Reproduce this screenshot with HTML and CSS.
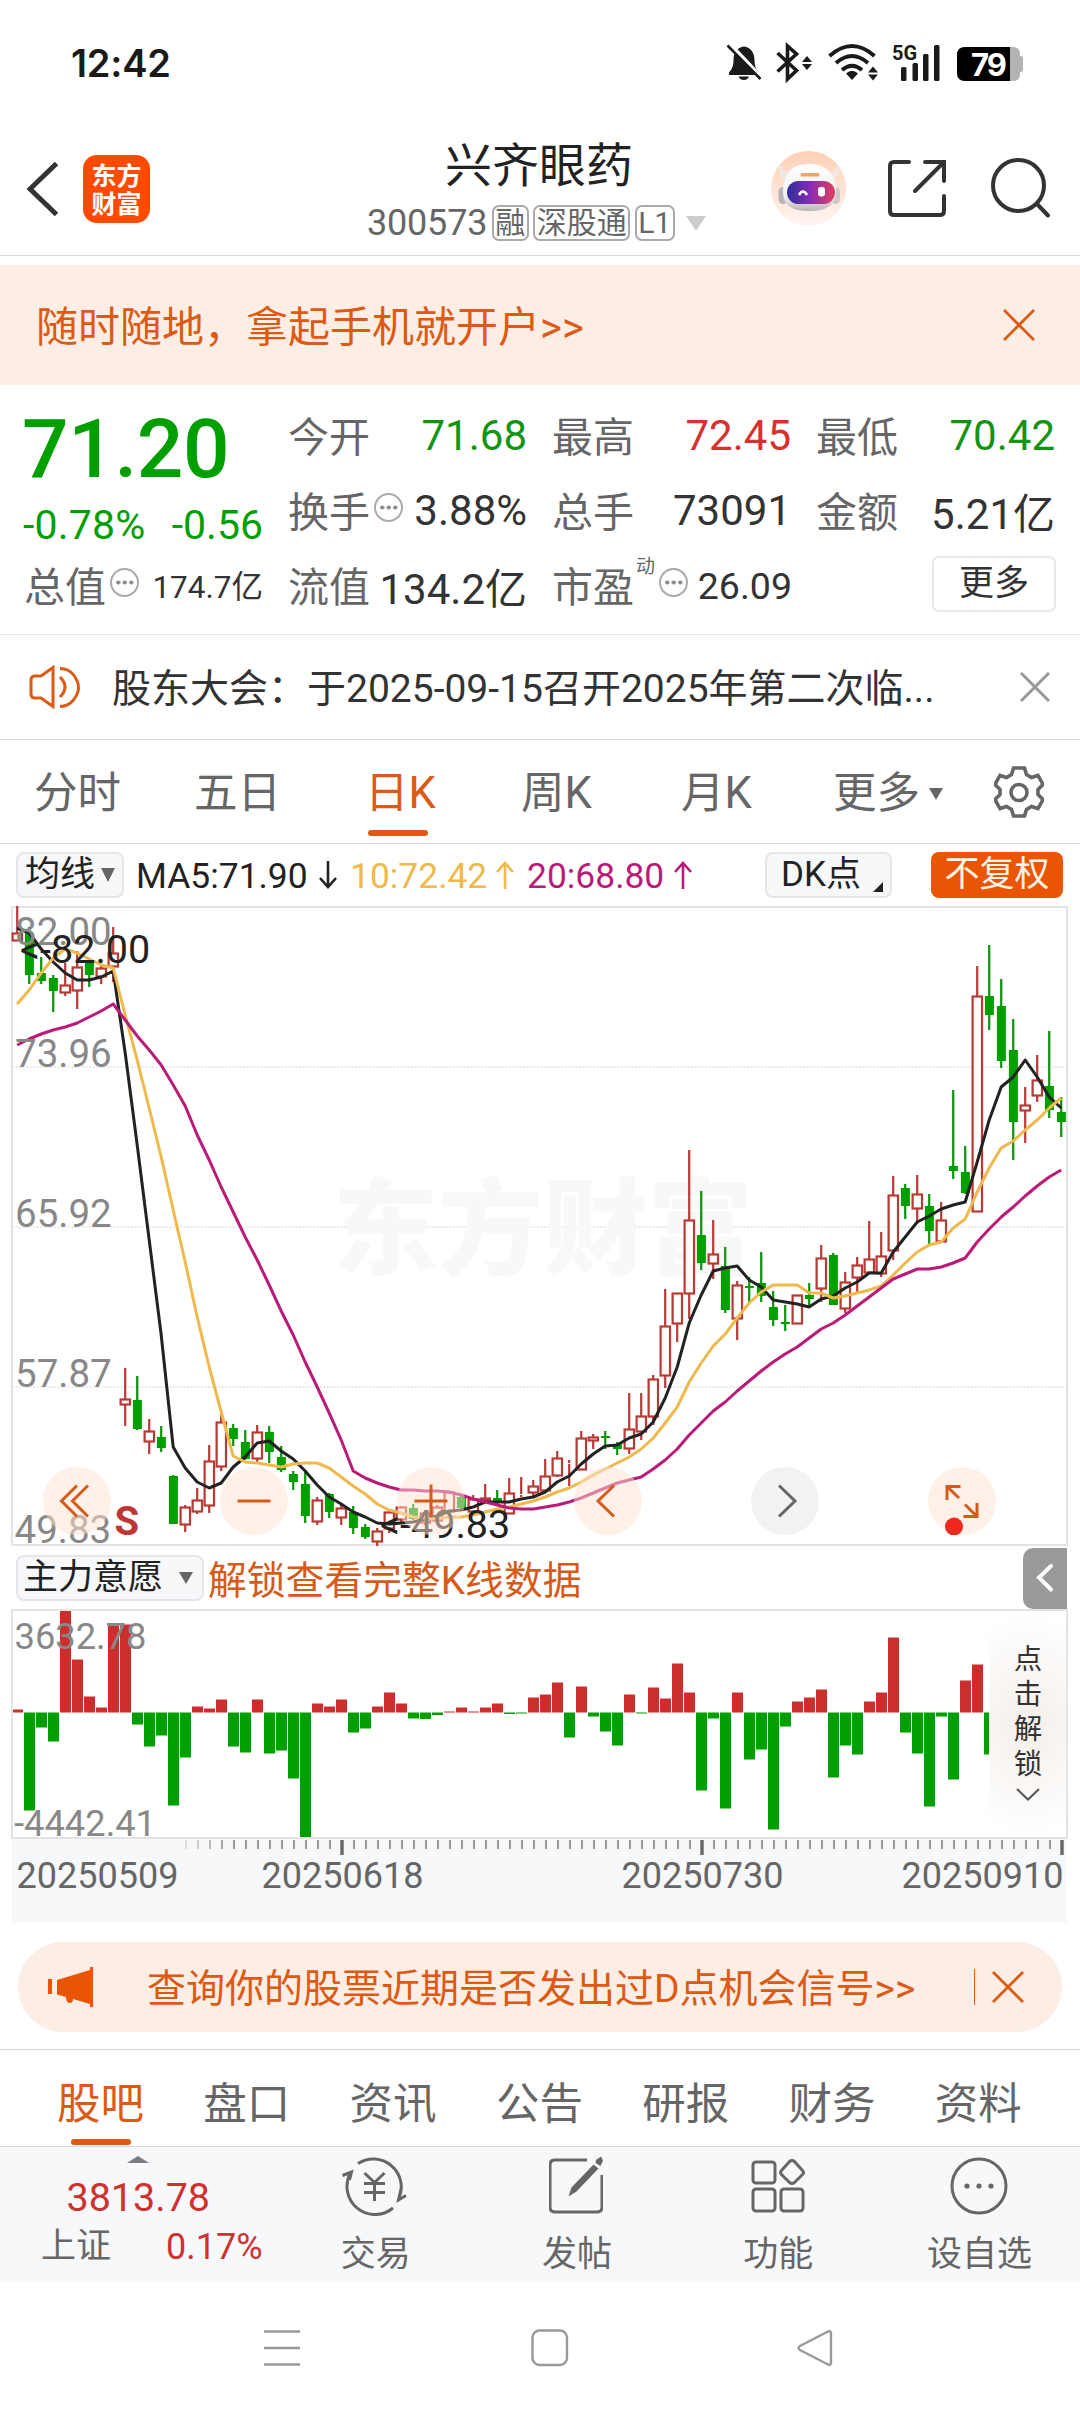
FILE: index.html
```html
<!DOCTYPE html>
<html lang="zh-CN">
<head>
<meta charset="utf-8">
<title>兴齐眼药 300573</title>
<link rel="stylesheet" href="styles.css">
</head>
<body>
<div class="screen">
  <div class="status">
    <span class="clock">12:42</span>
    <svg class="status-icons" viewBox="725 40 300 45" width="300" height="45">
      <g fill="#1a1a1a">
        <path d="M744 46.500c-7 1-10.500 6.500-10.500 13.500 0 6-1.500 9-4.500 12.500v2.500h30v-2.500c-3-3.500-4.500-6.500-4.500-12.500 0-7-3.500-12.500-10.500-13.500z"/>
        <path d="M738.500 76.500h10.500q-1.500 3.500-5.200 3.500t-5.300-3.500z"/>
        <path d="M807 56l5 6h-10zM807 70l5-6h-10zM873 66.500l5 6h-10zM873 80.500l5-6h-10z"/>
        <path d="M852 80l-6-6.500q6-5.500 12 0z"/>
        <rect x="901" y="67" width="5.500" height="14" rx="1.500"/><rect x="912.500" y="63" width="5.500" height="18" rx="1.500"/><rect x="923" y="54" width="5.500" height="27" rx="1.500"/><rect x="934" y="45" width="5.500" height="36" rx="1.500"/>
      </g>
      <path d="M729 43l34 36" stroke="#fff" stroke-width="4"/>
      <path d="M727.500 45.500l33 33.500" stroke="#1a1a1a" stroke-width="2.500"/>
      <path d="M777.500 53l19 17.500-9 8.500v-33l9 8-19 17.500" fill="none" stroke="#1a1a1a" stroke-width="3.600"/>
      <path d="M829.500 56q22.500-20 45 0M836 63q16-14 32 0M842 70q10-8.500 20 0" fill="none" stroke="#1a1a1a" stroke-width="3.800"/>
      <text x="892" y="60" class="net">5G</text>
      <path d="M1010 47h3q7 0 7 7v2h1q2 0 2 3v10q0 3-2 3h-1v2q0 7-7 7h-3z" fill="#b3b3b3"/>
      <path d="M1010 47v34h-45q-8 0-8-8V55q0-8 8-8z"/>
      <text x="971" y="75.500" class="bat">79</text>
    </svg>
  </div>

  <header class="head">
    <svg class="back" width="32" height="56" viewBox="0 0 32 56"><path d="M29.500 2.500L3 28l26.500 25.500" fill="none" stroke="#333" stroke-width="5"/></svg>
    <div class="logo"><span>东方</span><span>财富</span></div>
    <div class="title">
      <h1>兴齐眼药</h1>
      <div class="sub"><span>300573</span><b>融</b><b>深股通</b><b>L1</b><i class="tri"></i></div>
    </div>
    <svg class="tools" width="282" height="80" viewBox="769 149 282 80">
      <defs>
        <linearGradient id="halo" x2="0" y2="1"><stop offset="0" stop-color="#ffcfb6"/><stop offset="1" stop-color="#fff6f1"/></linearGradient>
        <linearGradient id="visor"><stop offset="0" stop-color="#2c2e9c"/><stop offset=".5" stop-color="#8c2cb4"/><stop offset="1" stop-color="#e0405c"/></linearGradient>
        <linearGradient id="shell" x2="0" y2="1"><stop offset="0" stop-color="#fff"/><stop offset=".7" stop-color="#f1eeee"/><stop offset="1" stop-color="#b9b3b8"/></linearGradient>
      </defs>
      <circle cx="808.500" cy="188.500" r="37.500" fill="url(#halo)"/>
      <path d="M780 164q-3 8 1 13 3 5 8 6l6-9q-12-1-15-10zM838 164q3 8-1 13-3 5-8 6l-6-9q12-1 16-10z" fill="#f1e6e3"/>
      <rect x="778.500" y="187" width="9" height="17" rx="4.500" fill="#b9b2b8"/><rect x="831" y="187" width="9" height="17" rx="4.500" fill="#cfc7ca"/>
      <path d="M783 192c0-20 10-28 26-28s27 8 27 28c0 14-11 19-27 19s-26-5-26-19z" fill="url(#shell)"/>
      <rect x="800.500" y="173" width="19" height="3.500" rx="1.500" fill="#efa467"/>
      <rect x="787" y="181" width="48" height="23" rx="11.500" fill="url(#visor)"/>
      <path d="M799 195q4-7 8 0" fill="none" stroke="#fff" stroke-width="2.600"/><rect x="818" y="187" width="7" height="9.500" rx="3" fill="#fff"/>
      <g fill="none" stroke="#333" stroke-width="4" stroke-linecap="round">
        <path d="M909 162h-15q-4 0-4 4v45q0 4 4 4h46q4 0 4-4v-15M925 162h19v19M943 163l-28 28"/>
        <circle cx="1018.500" cy="185.500" r="25.500"/><path d="M1037.500 204.500l10.500 11"/>
      </g>
    </svg>
  </header>

  <div class="promo">
    <span>随时随地，拿起手机就开户&gt;&gt;</span>
    <svg width="34" height="34" viewBox="0 0 34 34"><path d="M2 2l30 30M32 2L2 32" stroke="#dc5a14" stroke-width="2.800"/></svg>
  </div>

  <section class="quote">
    <div class="price">
      <strong>71.20</strong>
      <div class="delta"><span>-0.78%</span><span>-0.56</span></div>
    </div>
    <div class="cell"><label>今开</label><em class="down">71.68</em></div>
    <div class="cell"><label>最高</label><em class="up">72.45</em></div>
    <div class="cell"><label>最低</label><em class="down">70.42</em></div>
    <div class="cell"><label>换手</label><i class="dots"></i><em>3.88%</em></div>
    <div class="cell"><label>总手</label><em>73091</em></div>
    <div class="cell"><label>金额</label><em>5.21亿</em></div>
    <div class="cell"><label>总值</label><i class="dots"></i><em class="small">174.7亿</em></div>
    <div class="cell"><label>流值</label><em>134.2亿</em></div>
    <div class="cell"><label>市盈</label><sup>动</sup><i class="dots pe"></i><em class="mid">26.09</em></div>
    <div class="cell"><button class="more">更多</button></div>
  </section>

  <div class="news">
    <svg width="52" height="44" viewBox="29 665 52 44"><g fill="none" stroke="#dc5a14" stroke-width="3"><path d="M53 667.500L41 676h-6q-4 0-4 4v14q0 4 4 4h6l12 8.500z"/><path d="M60 677q10 10 0 20M60 668.500q9 0 14 7t4.500 13-5.500 12-13 6"/></g></svg>
    <span>股东大会：于2025-09-15召开2025年第二次临...</span>
    <svg width="30" height="30" viewBox="0 0 30 30"><path d="M1 1l28 28M29 1L1 29" stroke="#999" stroke-width="3"/></svg>
  </div>

  <nav class="periods">
    <span>分时</span><span>五日</span><span class="on">日K</span><span>周K</span><span>月K</span><span>更多<i class="tri dark"></i></span>
    <svg width="50" height="52" viewBox="-25 -26 50 52"><g fill="none" stroke="#666" stroke-width="3.600"><path d="M-5.500-24h11l2 6.500 5 3 6.500-2 5 9-5 5v5l5 5-5 9-6.500-2-5 3-2 6.500h-11l-2-6.500-5-3-6.500 2-5-9 5-5v-5l-5-5 5-9 6.500 2 5-3z"/><circle cy="0.500" r="8"/></g></svg>
  </nav>

  <div class="ma">
    <span class="chip avg">均线<i class="tri dark"></i></span>
    <span class="m5">MA5:71.90</span><svg class="a5" width="18" height="28" viewBox="0 0 18 28"><path d="M9 0v26M1 17l8 9 8-9" fill="none" stroke="#222" stroke-width="2.600"/></svg>
    <span class="m10">10:72.42</span><svg class="a10" width="18" height="28" viewBox="0 0 18 28"><path d="M9 28V2M1 11l8-9 8 9" fill="none" stroke="#efb94c" stroke-width="2.600"/></svg>
    <span class="m20">20:68.80</span><svg class="a20" width="18" height="28" viewBox="0 0 18 28"><path d="M9 28V2M1 11l8-9 8 9" fill="none" stroke="#ba1b79" stroke-width="2.600"/></svg>
    <span class="chip dk">DK点<i class="corner"></i></span>
    <span class="chip fq">不复权</span>
  </div>

  <section class="kline">
    <svg width="1080" height="640" viewBox="0 906 1080 640">
      <g class="frame">
        <path d="M12 907H1067V1545H12z"/>
        <path class="grid" d="M12 1067H1067M12 1227H1067M12 1387H1067"/>
      </g>
      <text class="mark" x="333" y="1266">东方财富</text>
      <g id="candles"></g>
      <g id="averages"></g>
      <g class="scale"><text x="15" y="945">82.00</text><text x="15" y="1067">73.96</text><text x="15" y="1227">65.92</text><text x="15" y="1387">57.87</text><text x="14.500" y="1543">49.83</text></g>
      <text class="peak" x="20" y="963">&lt;-82.00</text>
      <text class="peak" x="380" y="1537.500">&lt;-49.83</text>
      <text class="sell" x="114.500" y="1534.500">S</text>
    </svg>
    <div class="controls">
      <i><svg viewBox="-34 -34 68 68"><path d="M0-15.500L-15.500 0 0 15.500M11-15.500L-4.500 0 11 15.500"/></svg></i>
      <i><svg viewBox="-34 -34 68 68"><path d="M-16.500 0h33"/></svg></i>
      <i><svg viewBox="-34 -34 68 68"><path d="M-16.500 0h33M0-16.500v33"/></svg></i>
      <i><svg viewBox="-34 -34 68 68"><path d="M6-15.500L-10 0 6 15.500"/></svg></i>
      <i class="off"><svg viewBox="-34 -34 68 68"><path d="M-6-15.500L10 0-6 15.500"/></svg></i>
      <i><svg viewBox="-34 -34 68 68"><path d="M-15-1v-13.500H-1.500M-15-14.500L-3-3M15 2v13.500H1.500M15 15.500L3 3.500"/><circle class="dot" cx="-8" cy="25.500" r="9"/></svg></i>
    </div>
  </section>

  <div class="indicator">
    <span class="chip main">主力意愿<i class="tri dark"></i></span>
    <span class="unlock">解锁查看完整K线数据</span>
    <span class="fold"><svg width="18" height="30" viewBox="0 0 18 30"><path d="M15 3L3 14.500 15 26.500" fill="none" stroke="#fff" stroke-width="4" stroke-linecap="round"/></svg></span>
  </div>

  <section class="volume">
    <svg width="1080" height="230" viewBox="0 1609 1080 230">
      <g id="bars"></g>
      <path class="edge" d="M12 1610H1067V1838H12z"/>
      <g class="scale vs"><text x="14.500" y="1648.500">3632.78</text><text x="14" y="1836">-4442.41</text></g>
    </svg>
    <div class="lock"><span>点</span><span>击</span><span>解</span><span>锁</span><svg width="24" height="13" viewBox="0 0 24 13"><path d="M1 1l11 10.500L23 1" fill="none" stroke="#555" stroke-width="2"/></svg></div>
  </section>

  <div class="axis">
    <svg width="1055" height="16" viewBox="12 1839 1055 16"><g id="ticks"></g></svg>
    <div class="dates"><span>20250509</span><span>20250618</span><span>20250730</span><span>20250910</span></div>
  </div>

  <div class="banner">
    <svg width="46" height="40" viewBox="48 1967 46 40"><path d="M48 1979h4v15h-4zM57 1980l33-10v-3h3v40h-3v-3l-17-5q0 4-3 4-4 0-4-6l-9-2.500z" fill="#ea5504"/></svg>
    <span>查询你的股票近期是否发出过D点机会信号&gt;&gt;</span>
    <u></u>
    <svg width="32" height="32" viewBox="0 0 32 32"><path d="M1 1l30 30M31 1L1 31" stroke="#dc5a14" stroke-width="2.800"/></svg>
  </div>

  <nav class="sections">
    <span class="on">股吧</span><span>盘口</span><span>资讯</span><span>公告</span><span>研报</span><span>财务</span><span>资料</span>
  </nav>

  <footer class="bottom">
    <div class="index">
      <i class="caret"></i>
      <strong>3813.78</strong>
      <div><span>上证</span><em>0.17%</em></div>
    </div>
    <div class="act"><svg viewBox="343 2156 66 60" width="66" height="60"><path d="M359 2163.500A28 28 0 0 1 400 2198M402.500 2187L399.500 2200l7.500-4.500M394 2208A28 28 0 0 1 351.500 2173M343.500 2175.500l9-3.500-2 8M365.500 2173l10 9.500 10-9.500M365 2183.500h21M365 2192.500h21M375.500 2183v18"/></svg><span>交易</span></div>
    <div class="act"><svg viewBox="550 2156 54 60" width="54" height="60"><path d="M588 2160h-32q-5 0-5 5v42q0 5 5 5h42q5 0 5-5v-32"/><path class="solid" d="M597 2160l5-3.500 2 4-2.500 5.500-5-3zM594.500 2164.500l5 4-22 23-8 5 3-9z"/></svg><span>发帖</span></div>
    <div class="act"><svg viewBox="751 2156 54 60" width="54" height="60"><rect x="753" y="2162" width="22" height="21" rx="3"/><rect x="753" y="2189" width="22" height="22" rx="3"/><rect x="781" y="2189" width="22" height="22" rx="3"/><path d="M789.500 2161.500q2.500-2 5 0l8 9q2 2 0 4l-8 8q-2.500 2-5 0l-8-8q-2-2 0-4z"/></svg><span>功能</span></div>
    <div class="act"><svg viewBox="950 2156 58 60" width="58" height="60"><circle cx="979" cy="2186" r="27"/><g class="solid"><circle cx="967" cy="2186" r="2.600"/><circle cx="979" cy="2186" r="2.600"/><circle cx="991" cy="2186" r="2.600"/></g></svg><span>设自选</span></div>
  </footer>

  <div class="sysnav">
    <svg width="36" height="38" viewBox="0 0 36 38"><path d="M0 2.500h36M0 19h36M0 35.500h36"/></svg>
    <svg width="38" height="38" viewBox="0 0 38 38"><rect x="1.500" y="1.500" width="34.500" height="34.500" rx="7"/></svg>
    <svg width="38" height="38" viewBox="0 0 38 38"><path d="M32 2.500L4 17q-3 2 0 4l28 14.500q3 1 3-2v-29q0-3-3-2z"/></svg>
  </div>
</div>
<script src="chart.js"></script>
</body>
</html>
```

FILE: styles.css
```css
* { box-sizing: border-box; }
body {
  margin: 0;
  background: #fff;
  font-family: Roboto, "Noto Sans CJK SC", sans-serif;
  color: #333;
}
svg { display: block; flex: none; }
h1, em, i, b, strong, u { font-style: normal; font-weight: 400; margin: 0; text-decoration: none; }
.screen { width: 1080px; height: 2414px; display: flex; flex-direction: column; overflow: hidden; }
.screen > * { flex: none; }
span, label, em { white-space: nowrap; }

.tri { display: inline-block; width: 0; height: 0; border: 10.5px solid transparent; border-top: 15px solid #ccc; border-bottom: 0; }
.tri.dark { border-width: 12px 7.5px 0; border-top-color: #666; }

.status { height: 115px; display: flex; justify-content: space-between; padding: 41px 55px 0 71px; }
.status-icons { margin-top: -1px; }
.clock { font: 600 38px/45px Inter, sans-serif; color: #1a1a1a; letter-spacing: -.2px; }
.net { font: 700 20px Roboto, sans-serif; fill: #1a1a1a; }
.bat { font: 700 31px Inter, sans-serif; fill: #fff; letter-spacing: -2px; }

.head { height: 141px; display: flex; align-items: flex-start; border-bottom: 1px solid #d8d8d8; padding-left: 27px; }
.back { margin-top: 46px; }
.logo { margin: 40px 0 0 24px; width: 67px; height: 68px; border-radius: 14px; background: #ff4a00; color: #fff; font: 700 25px/28px "Noto Sans CJK SC", sans-serif; display: flex; flex-direction: column; align-items: center; justify-content: center; padding-bottom: 2px; }
.title { width: 400px; margin: 21px 0 0 201px; }
.title h1 { font-size: 47px; line-height: 60px; color: #222; margin-left: 94px; }
.sub { display: flex; align-items: center; height: 36px; margin-top: 9px; margin-left: 16px; font-size: 36px; color: #666; }
.sub span { letter-spacing: -.2px; }
.sub b { height: 36px; border: 2px solid #aaa; border-radius: 7px; font-size: 30px; line-height: 31px; padding: 0 1.5px; margin-left: 4.5px; }
.sub .tri { margin-left: 11px; }
.tools { margin: 34px 0 0 18px; }

.promo { height: 120px; margin-top: 9px; padding: 0 44px 0 36px; background: #fceee5; display: flex; align-items: center; justify-content: space-between; font-size: 42px; color: #dc5a14; }
.promo span { margin-top: -4px; }
.promo svg { margin-top: -1px; }

.quote { height: 250px; padding: 13px 0 0 25px; display: grid; grid-template-columns: repeat(4, 238px); column-gap: 26px; grid-template-rows: repeat(3, 75px); border-bottom: 1px solid #e8e8e8; }
.price { grid-row: span 2; color: #009f00; }
.price strong { display: block; font-weight: 500; font-size: 82px; line-height: 98px; letter-spacing: -.4px; margin: 2px 0 0 -3px; }
.delta { display: flex; justify-content: space-between; font-size: 41px; line-height: 50px; margin: 2px 0 0 -2px; }
.delta span:first-child { letter-spacing: .2px; }
.cell { display: flex; align-items: center; }
.cell label { font-size: 41px; color: #666; margin: -4px 0 0 -1px; }
.cell em { margin-left: auto; font-size: 42px; }
.cell .small { font-size: 31.5px; margin-top: -3px; }
.cell .mid { font-size: 37.5px; margin-right: -1px; }
.cell .up, .up { color: #d9302f; }
.cell .down { color: #139413; }
.cell sup { font-size: 19px; line-height: 20px; color: #666; align-self: flex-start; margin: 9px 0 0 2px; vertical-align: baseline; }
.dots { width: 29px; height: 29px; margin: -7px 0 0 4px; border: 2px solid #aaa; border-radius: 50%; background: radial-gradient(circle, #888 1.8px, transparent 2.3px) 0 0 / 6.500px 25px repeat-x; background-origin: content-box; background-clip: content-box; padding: 0 3px; }
.dots.pe { margin-left: 4px; }
.more { margin: -3px -1px 0 auto; width: 124px; height: 56px; border: 2px solid #e8e8e8; border-radius: 7px; background: #fff; font: 35px/48px Roboto, "Noto Sans CJK SC", sans-serif; color: #333; padding: 0; }

.news { height: 105px; display: flex; align-items: center; padding: 0 30px 0 29px; border-bottom: 1px solid #d8d8d8; font-size: 39px; }
.news span { flex: 1; margin: -5px 0 0 31px; }
.news svg { margin-top: -1px; }

.periods { height: 104px; display: grid; grid-template-columns: 160px 171px 156px 160px 152px 161px auto; padding-left: 34px; align-items: center; border-bottom: 1px solid #d8d8d8; font-size: 43.5px; line-height: 60px; color: #666; }
.periods span { height: 103px; padding-top: 24px; }
.periods .tri { margin-left: 9px; vertical-align: 8px; }
.on { color: #dc5a14; position: relative; }
.on::after { content: ""; position: absolute; left: 3px; bottom: 7px; width: 60px; height: 6px; border-radius: 3px; background: #dc5a14; }

.ma { height: 62px; display: flex; align-items: center; padding-left: 16px; font-size: 35.4px; color: #222; }
.chip { height: 46px; border: 2px solid #e4e6ea; border-radius: 8px; background: #f7f8fa; font-size: 35px; line-height: 42px; display: flex; align-items: center; color: #222; }
.avg { width: 108px; padding-left: 7px; }
.avg .tri { margin-left: 6px; border-width: 14px 7.5px 0; }
.m5 { width: 166px; margin: 1px 0 0 12px; }
.a5 { margin-left: 17px; }
.m10 { width: 134px; margin: 1px 0 0 13px; color: #efb94c; }
.a10 { margin-left: 12px; }
.m20 { width: 137px; margin: 1px 0 0 13px; color: #ba1b79; }
.a20 { margin-left: 10px; }
.dk { width: 127px; margin-left: 73px; padding-left: 14px; }
.corner { border: 5.500px solid transparent; border-right-color: #222; border-bottom-color: #222; margin: 24px 0 0 12px; }
.fq { width: 132px; margin-left: 39px; border: 0; background: #ea5504; color: #fff3e8; justify-content: center; }

.kline { height: 640px; position: relative; }
.frame path, .edge { fill: none; stroke: #e3e3e3; stroke-width: 2; }
.frame .grid { stroke: #e4e4e4; stroke-width: 1.500; stroke-dasharray: 2 1.500; }
.mark { font: 900 105px "Noto Sans CJK SC", sans-serif; fill: #f8f8f8; }
.scale { font-size: 38.500px; fill: #888; }
.scale.vs { font-size: 36.300px; }
.peak { font-size: 39.500px; fill: #222; }
.sell { font-size: 40px; font-weight: 700; fill: #c03535; }
.rise { fill: #fff; stroke: #b83a36; stroke-width: 2.200; }
.fall { fill: #009f00; }
.wick-r { stroke: #b83a36; stroke-width: 2.200; }
.wick-f { stroke: #0b920b; stroke-width: 2.200; }
.avgline { fill: none; stroke-width: 3; stroke-linejoin: round; }
.controls { position: absolute; left: 42.500px; top: 560.500px; display: flex; gap: 109.200px; }
.controls i { width: 68px; height: 68px; border-radius: 50%; background: rgba(255, 226, 210, .5); }
.controls path { fill: none; stroke: #d65a1a; stroke-width: 3; }
.controls .off { background: rgba(230, 230, 230, .5); }
.controls .off path { stroke: #666; }
.controls .dot { fill: #f0281e; }

.indicator { height: 64px; margin-bottom: -1px; display: flex; align-items: center; padding-left: 16px; }
.main { width: 188px; padding-left: 5px; }
.main .tri { margin-left: 16px; }
.unlock { margin: -3px 0 0 4px; font-size: 38.800px; color: #d65a1a; }
.fold { margin-left: auto; margin-right: 13px; width: 44px; height: 61px; background: #999; border-radius: 10px 0 0 10px; display: flex; align-items: center; justify-content: center; }

.volume { height: 230px; position: relative; }
.lock { position: absolute; left: 989px; top: 2px; width: 77px; height: 226px; padding: 31px 0 0 1px; background: radial-gradient(ellipse 90px 110px at 50% 50%, #f4eee9, #fff); display: flex; flex-direction: column; align-items: center; font-size: 28.500px; line-height: 35px; color: #333; }
.lock svg { margin-top: 6px; }

.axis { width: 1055px; height: 84px; margin-left: 12px; background: #f7f8fa; color: #666; }
.tick { stroke: #999; stroke-width: 2; }
.tick.major { stroke: #666; stroke-width: 3.400; }
.dates { display: grid; grid-template-columns: 245px 360px 280px auto; padding: 1px 0 0 4.500px; font-size: 36px; line-height: 40px; }

.banner { width: 1044px; height: 90px; margin: 19px 0 17px 18px; padding: 0 38px 0 30px; border-radius: 45px; background: #fceee5; display: flex; align-items: center; color: #dc5a14; font-size: 39px; }
.banner span { flex: 1; margin: -5px 0 0 53px; }
.banner u { width: 1px; height: 36px; background: #dc5a14; margin-right: 17px; }
.banner svg { margin-top: -1px; }

.sections { height: 98px; border-top: 1px solid #d8d8d8; border-bottom: 1px solid #d8d8d8; padding-left: 57px; display: grid; grid-template-columns: repeat(7, 146.300px); font-size: 43.5px; line-height: 60px; color: #666; }
.sections span { padding-top: 25px; height: 96px; }
.sections .on::after { left: 14px; bottom: 1px; }

.bottom { height: 135px; background: #f7f8fa; display: grid; grid-template-columns: 274.500px repeat(4, 201.300px); color: #666; font-size: 35px; }
.index { display: flex; flex-direction: column; align-items: center; }
.caret { margin: 9px 0 0 2px; border: 11px solid transparent; border-top: 0; border-bottom: 7px solid #7c7c80; }
.index strong { font-size: 39.500px; line-height: 44px; margin: 13px 0 0 2px; color: #cf3030; }
.index div { align-self: stretch; display: flex; align-items: center; justify-content: space-between; padding: 3px 12px 0 41px; line-height: 48px; }
.index em { color: #cf3030; font-size: 36px; }
.act { display: flex; flex-direction: column; align-items: center; padding-top: 9px; }
.act svg { fill: none; stroke: #666; stroke-width: 3; }
.act .solid { fill: #666; stroke: none; }
.act span { line-height: 50px; margin: 14px 0 0 1px; }

.sysnav { height: 132px; display: flex; padding: 47px 0 0 264px; }
.sysnav svg { fill: none; stroke: #999; stroke-width: 2.400; margin-right: 231px; }
.sysnav svg + svg { margin-right: 227px; }
```

FILE: chart.js
```js
// Each candle: direction (r = rise, g = fall), high, body top, body bottom, low in drawing units.
const candles = `r906,933,941,941 g927,933,975,984 g957,973,981,984 g975,978,991,1012 r963,985,993,996 r951,967,991,1009
g958,960,975,987 r965,968,977,984 r927,953,967,982 r1368,1399,1405,1426 g1376,1400,1429,1430 r1419,1431,1442,1454
g1426,1437,1448,1452 g1475,1476,1524,1524 r1505,1507,1525,1532 r1488,1500,1512,1514 r1445,1461,1506,1513 r1410,1422,1467,1471
g1424,1428,1439,1446 g1430,1442,1459,1460 r1425,1432,1459,1462 g1426,1432,1452,1463 g1446,1457,1470,1472 g1471,1474,1482,1490
g1472,1484,1516,1523 r1497,1500,1522,1525 g1493,1494,1512,1518 r1505,1508,1518,1525 g1506,1512,1528,1534 g1524,1527,1537,1539
r1528,1531,1542,1547 r1510,1512,1529,1533 r1506,1507,1520,1522 g1504,1508,1519,1520 r1510,1513,1523,1525 r1505,1507,1521,1523
r1491,1492,1512,1514 g1495,1497,1508,1510 r1495,1499,1512,1514 r1484,1498,1501,1503 g1490,1498,1503,1505 r1478,1493,1514,1514
r1477,1494,1495,1497 r1480,1486,1493,1497 r1459,1476,1491,1491 r1451,1458,1476,1477 r1460,1463,1464,1486 r1431,1438,1470,1470
r1434,1437,1441,1449 g1431,1436,1438,1449 g1442,1444,1449,1455 r1393,1429,1449,1454 r1393,1416,1432,1440 r1375,1379,1417,1425
r1289,1326,1376,1388 r1293,1293,1324,1342 r1150,1220,1294,1319 g1191,1235,1263,1270 r1220,1254,1264,1279 g1247,1266,1310,1313
r1281,1285,1319,1340 g1277,1286,1288,1303 g1252,1283,1296,1302 g1291,1307,1320,1326 g1305,1322,1324,1331 r1295,1295,1324,1324
g1283,1295,1299,1306 r1245,1258,1289,1302 g1253,1255,1305,1305 r1272,1282,1309,1313 r1257,1265,1278,1293 r1221,1259,1273,1273
r1232,1256,1274,1277 r1176,1195,1251,1260 g1184,1188,1206,1219 r1175,1194,1209,1224 g1194,1206,1231,1245 r1202,1220,1242,1242
g1090,1166,1171,1179 g1146,1172,1193,1194 r966,996,1212,1212 g945,996,1015,1030 g979,1006,1061,1068 g1019,1050,1122,1160
r1087,1105,1111,1143 r1055,1080,1096,1102 g1031,1086,1110,1118 g1097,1112,1122,1137`.split(/\s+/);

const averages = {
  '#222': [928,933,949,962,973,980,980,977,971,1053,1145,1240,1335,1447,1468,1482,1488,1483,1467,1457,1443,1441,1451,1459,1471,1485,1497,1504,1512,1517,1523,1524,1523,1522,1519,1516,1511,1510,1507,1502,1502,1502,1499,1497,1492,1482,1476,1464,1454,1446,1445,1438,1434,1422,1398,1367,1323,1295,1271,1268,1266,1280,1287,1300,1302,1304,1307,1299,1296,1288,1282,1273,1273,1252,1237,1222,1216,1209,1205,1202,1162,1120,1087,1077,1060,1077,1097,1108],
  '#efb94c': [1004,990,973,958,949,953,959,965,968,1015,1060,1108,1157,1210,1262,1317,1367,1412,1456,1462,1463,1465,1467,1464,1463,1463,1468,1477,1486,1494,1504,1510,1513,1517,1518,1519,1517,1517,1515,1512,1509,1507,1504,1501,1497,1492,1488,1482,1475,1469,1463,1457,1449,1438,1423,1407,1382,1363,1346,1334,1318,1303,1292,1285,1285,1285,1293,1293,1298,1296,1293,1290,1286,1275,1263,1252,1245,1242,1228,1219,1192,1168,1148,1141,1130,1120,1108,1098],
  '#ba1b79': [1045,1039,1034,1030,1027,1023,1017,1011,1004,1020,1036,1050,1065,1085,1106,1135,1160,1187,1212,1237,1260,1285,1311,1335,1362,1387,1413,1440,1471,1478,1483,1487,1490,1490,1491,1491,1492,1495,1499,1502,1505,1508,1509,1509,1507,1505,1502,1498,1493,1488,1483,1480,1477,1469,1460,1449,1435,1423,1411,1402,1391,1381,1371,1362,1354,1347,1338,1329,1323,1315,1306,1297,1288,1279,1274,1269,1269,1267,1263,1258,1242,1229,1217,1207,1196,1186,1177,1170]
};

const flows = [3,-98,-15,-29,102,53,16,5,87,88,-12,-34,-23,-93,-45,6,4,13,-34,-40,13,-41,-38,-66,-125,9,6,13,-20,-16,6,20,9,-6,-6.5,-2.5,1,5,1,5,9,-1.5,-1,15,18,30,-25,26,-4,-19,-33,18,-1,25,14,49,20,-78,-6,-96,20,-47,-37,-117,-14,11,15,23,-65,-33,-42,11,20,75,-20,-41,-94,-4,-67,32,48,-42];

const STEP = 12;
const cx = i => 17.2 + STEP * i;

document.getElementById('candles').innerHTML = candles.map((c, i) => {
  const [hi, top, bottom, lo] = c.slice(1).split(',').map(Number);
  const x = cx(i);
  if (c[0] === 'g') {
    return `<path class="wick-f" d="M${x} ${hi}V${lo}"/><rect class="fall" x="${x - 4.3}" y="${top}" width="9" height="${bottom - top}"/>`;
  }
  const h = Math.max(0, bottom - top - 1);
  return `<path class="wick-r" d="M${x} ${hi}V${top}M${x} ${bottom}V${lo}"/><rect class="rise" x="${x - 4.6}" y="${top + .5}" width="9.4" height="${h}"/>`;
}).join('');

document.getElementById('averages').innerHTML = Object.entries(averages).map(([color, ys]) =>
  `<polyline class="avgline" stroke="${color}" points="${ys.map((y, i) => cx(i) + ',' + y).join(' ')}"/>`
).join('');

document.getElementById('bars').innerHTML = flows.map((v, i) =>
  `<rect x="${12 + STEP * i}" y="${v > 0 ? 1712.5 - v : 1712.5}" width="11" height="${Math.abs(v)}" fill="${v > 0 ? '#cc2e2d' : '#009f00'}"/>`
).join('');

let ticks = '';
for (let x = 186; x <= 1062; x += STEP) {
  const major = (x - 342) % 360 === 0;
  ticks += `<path class="tick${major ? ' major' : ''}" opacity="${Math.min(1, (x - 170) / 60)}" d="M${x} 1840V${major ? 1855 : 1849}"/>`;
}
document.getElementById('ticks').innerHTML = ticks;
```
